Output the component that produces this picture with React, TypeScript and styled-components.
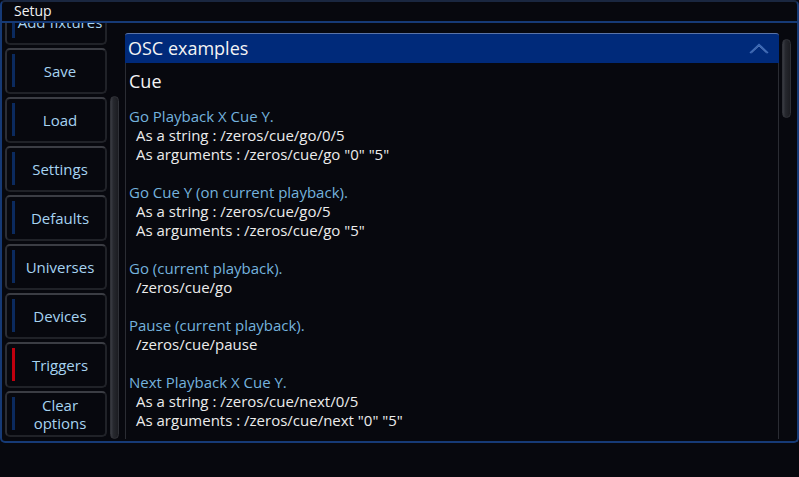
import React from 'react';
import styled, { createGlobalStyle } from 'styled-components';

const GlobalStyle = createGlobalStyle`
  html, body {
    margin: 0;
    padding: 0;
    background: #07080e;
  }
  body {
    font-family: 'Open Sans', 'Noto Sans', sans-serif;
  }
`;

const Screen = styled.div`
  width: 799px;
  height: 477px;
  background: #07080e;
  overflow: hidden;
`;

const Frame = styled.div`
  height: 443px;
  box-sizing: border-box;
  border: 2px solid #163a76;
  border-top-color: #1a2740;
  border-radius: 5px;
  display: flex;
  flex-direction: column;
  overflow: hidden;
`;

const TitleBar = styled.div`
  height: 19px;
  line-height: 17px;
  padding-left: 12px;
  font-size: 14px;
  color: #f2f2f2;
  border-bottom: 2px solid #163a76;
  flex-shrink: 0;
`;

const Body = styled.div`
  flex: 1;
  display: flex;
  min-height: 0;
  overflow: hidden;
`;

const Sidebar = styled.div`
  width: 102px;
  margin-left: 3px;
  overflow: hidden;
  flex-shrink: 0;
`;

const ButtonList = styled.div`
  display: flex;
  flex-direction: column;
  gap: 3px;
  margin-top: -24px;
`;

const NavButton = styled.div`
  height: 46px;
  box-sizing: border-box;
  border: 2px solid #202228;
  border-top-color: #3b3d44;
  border-left-color: #2c2e35;
  border-radius: 5px;
  background: #07080e;
  display: flex;
  align-items: stretch;
`;

const Indicator = styled.div<{ $color: string }>`
  width: 3px;
  margin: 4px 0 5px 5px;
  background: ${(p) => p.$color};
`;

const Label = styled.div`
  flex: 1;
  display: flex;
  align-items: center;
  justify-content: center;
  text-align: center;
  font-size: 15px;
  line-height: 18px;
  color: #a6d3f1;
`;

const Track = styled.div<{ $top: number; $height: number }>`
  width: 9px;
  margin-left: 3px;
  margin-top: ${(p) => p.$top}px;
  height: ${(p) => p.$height}px;
  box-sizing: border-box;
  border-radius: 5px;
  background: linear-gradient(90deg, #3a3c43 0%, #26282e 35%, #1c1d22 100%);
  border: 1px solid #303238;
  flex-shrink: 0;
`;

const Panel = styled.div`
  width: 654px;
  margin-left: 6px;
  margin-top: 10px;
  margin-bottom: 2px;
  display: flex;
  flex-direction: column;
  flex-shrink: 0;
`;

const PanelHeader = styled.div`
  height: 30px;
  box-sizing: border-box;
  background: #002a7a;
  border-top: 1px solid #5a74a8;
  border-radius: 3px 3px 0 0;
  padding: 0 10px 1px 3px;
  display: flex;
  align-items: center;
  justify-content: space-between;
  font-size: 18px;
  color: #f4f4f4;
`;

const PanelBody = styled.div`
  flex: 1;
  border-left: 1px solid #2a2c33;
  border-right: 1px solid #2a2c33;
  padding: 6px 0 0 3px;
  overflow: hidden;
`;

const SectionTitle = styled.div`
  font-size: 18px;
  line-height: 24px;
  color: #f4f4f4;
  margin-bottom: 14px;
`;

const Example = styled.div`
  margin-bottom: 19px;
  font-size: 15px;
  line-height: 19px;
`;

const ExampleTitle = styled.div`
  color: #74b2dd;
`;

const ExampleLine = styled.div`
  color: #ececec;
  padding-left: 7px;
  white-space: pre;
`;

const buttons = [
  { label: 'Add fixtures', color: '#0b2a5e' },
  { label: 'Save', color: '#0b2a5e' },
  { label: 'Load', color: '#0b2a5e' },
  { label: 'Settings', color: '#0b2a5e' },
  { label: 'Defaults', color: '#0b2a5e' },
  { label: 'Universes', color: '#0b2a5e' },
  { label: 'Devices', color: '#0b2a5e' },
  { label: 'Triggers', color: '#c0000e' },
  { label: 'Clear\noptions', color: '#0b2a5e' },
];

const examples = [
  {
    title: 'Go Playback X Cue Y.',
    lines: ['As a string : /zeros/cue/go/0/5', 'As arguments : /zeros/cue/go "0" "5"'],
  },
  {
    title: 'Go Cue Y (on current playback).',
    lines: ['As a string : /zeros/cue/go/5', 'As arguments : /zeros/cue/go "5"'],
  },
  {
    title: 'Go (current playback).',
    lines: ['/zeros/cue/go'],
  },
  {
    title: 'Pause (current playback).',
    lines: ['/zeros/cue/pause'],
  },
  {
    title: 'Next Playback X Cue Y.',
    lines: ['As a string : /zeros/cue/next/0/5', 'As arguments : /zeros/cue/next "0" "5"'],
  },
];

const Chevron = () => (
  <svg width="20" height="11" viewBox="0 0 20 11">
    <polyline points="1,10 10,1.5 19,10" fill="none" stroke="#3f6cb8" strokeWidth="1.6" />
    <polyline points="2.5,10 10,3 17.5,10" fill="none" stroke="#7f9fd8" strokeWidth="0.6" />
  </svg>
);

const App: React.FC = () => {
  return (
    <Screen>
      <GlobalStyle />
      <Frame>
        <TitleBar>Setup</TitleBar>
        <Body>
          <Sidebar>
            <ButtonList>
              {buttons.map((b) => (
                <NavButton key={b.label}>
                  <Indicator $color={b.color} />
                  <Label>
                    {b.label.split('\n').map((l, i) => (
                      <React.Fragment key={i}>
                        {i > 0 && <br />}
                        {l}
                      </React.Fragment>
                    ))}
                  </Label>
                </NavButton>
              ))}
            </ButtonList>
          </Sidebar>
          <Track $top={73} $height={343} />
          <Panel>
            <PanelHeader>
              OSC examples
              <Chevron />
            </PanelHeader>
            <PanelBody>
              <SectionTitle>Cue</SectionTitle>
              {examples.map((ex) => (
                <Example key={ex.title}>
                  <ExampleTitle>{ex.title}</ExampleTitle>
                  {ex.lines.map((l) => (
                    <ExampleLine key={l}>{l}</ExampleLine>
                  ))}
                </Example>
              ))}
            </PanelBody>
          </Panel>
          <Track $top={16} $height={79} />
        </Body>
      </Frame>
    </Screen>
  );
};

export default App;
